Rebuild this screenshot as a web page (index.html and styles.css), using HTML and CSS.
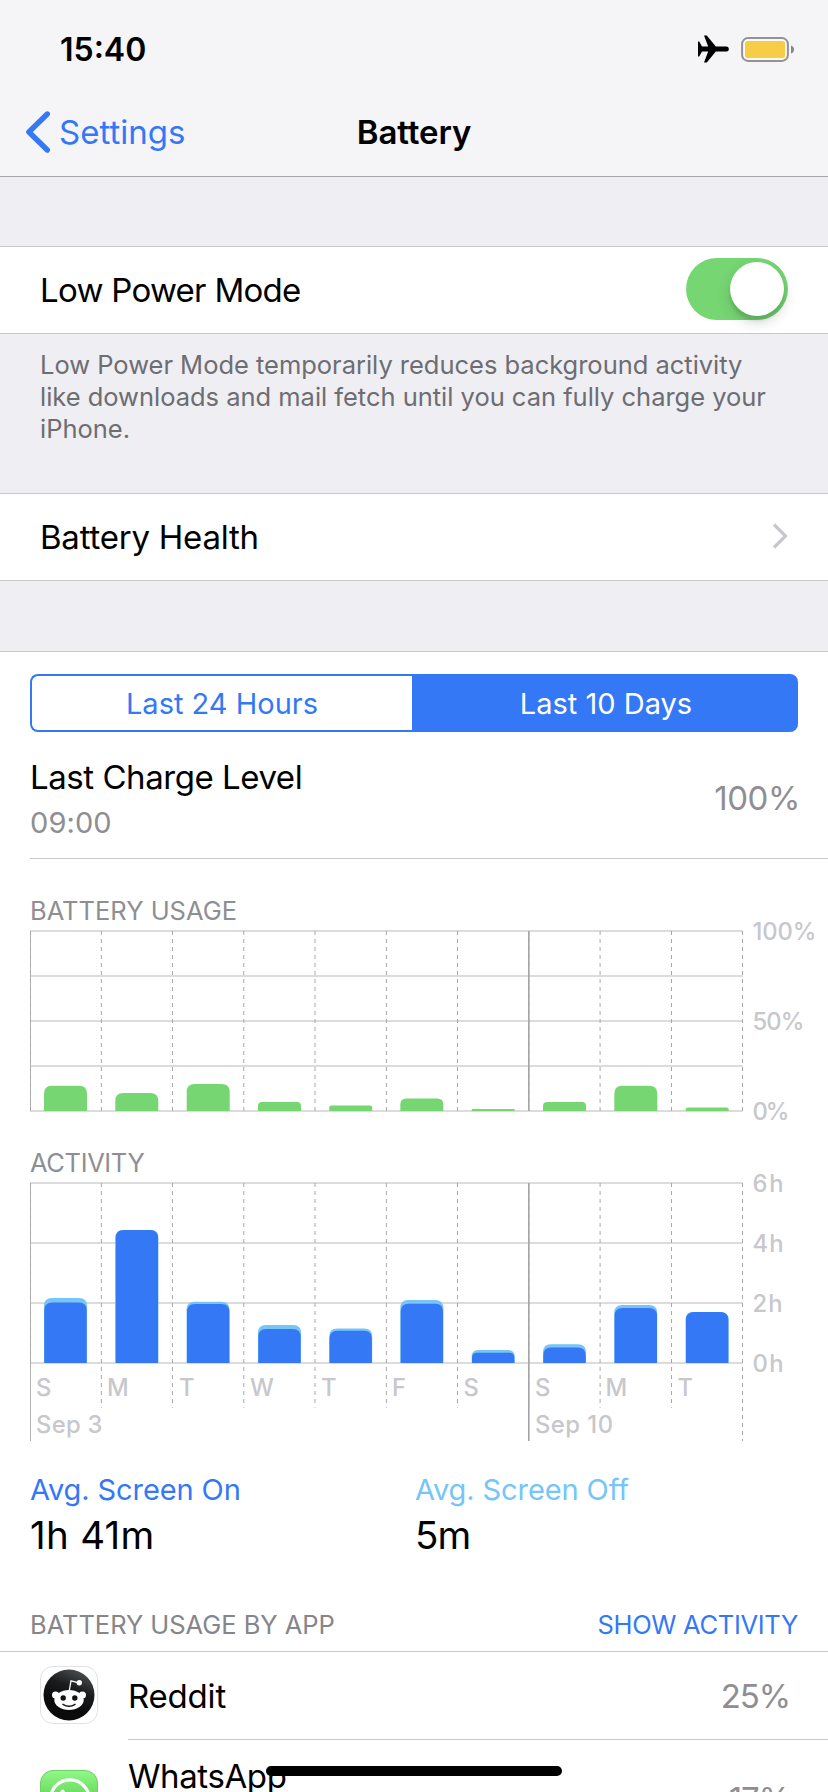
FILE: index.html
```html
<!DOCTYPE html>
<html lang="en">
<head>
<meta charset="utf-8">
<title>Battery</title>
<link rel="stylesheet" href="styles.css">
</head>
<body>
<div class="screen">
  <header class="header">
    <div class="status">
      <span class="clock">15:40</span>
      <svg class="status-icons" width="100" height="30" viewBox="0 0 100 30">
        <path d="M6 2h2.800l9 11h10.500a2.400 2.400 0 0 1 0 5H17.800l-9 11H6l4.200-11H4L1.200 23H0V8h1.200L4 13h6.200z" transform="translate(-2 -.5)"/>
        <rect x="44.100" y="4.100" width="45.800" height="22.800" rx="6" fill="#f9f9fa" stroke="#939395" stroke-width="2" transform="translate(-2 0)"/>
        <rect x="45" y="7" width="40" height="17" rx="2.500" fill="#f7cd46"/>
        <path d="M91 11.500q3 1 3 4t-3 4z" fill="#868688"/>
      </svg>
    </div>
    <nav class="nav">
      <a class="back"><svg width="26" height="44" viewBox="0 0 26 44"><path d="M23.300 4L4.900 22l18.400 18" fill="none" stroke="#3478f6" stroke-width="5.400" stroke-linecap="round" stroke-linejoin="round"/></svg><span class="back-label">Settings</span></a>
      <h1 class="title">Battery</h1>
    </nav>
  </header>

  <section class="row row-power">
    <span class="row-label lpm">Low Power Mode</span>
    <span class="switch"><span class="knob"></span></span>
  </section>
  <p class="note">Low Power Mode temporarily reduces background activity<br>like downloads and mail fetch until you can fully charge your<br>iPhone.</p>
  <section class="row row-health">
    <span class="row-label health">Battery Health</span>
    <svg class="chevron" width="18" height="28" viewBox="0 0 18 28"><path d="M3 2.500L14.500 14 3 25.500" fill="none" stroke="#c7c7cc" stroke-width="3.200"/></svg>
  </section>

  <main class="panel">
    <div class="segmented">
      <span class="segment seg-day">Last 24 Hours</span>
      <span class="segment active">Last 10 Days</span>
    </div>
    <div class="charge">
      <div>
        <div class="charge-title">Last Charge Level</div>
        <div class="charge-time">09:00</div>
      </div>
      <div class="charge-value">100%</div>
    </div>

    <h2 class="chart-title usage-title">BATTERY USAGE</h2>
    <svg class="chart" width="828" height="224" viewBox="0 925 828 224">
      <path class="grid" d="M30 931H742.500M30 976H742.500M30 1021H742.500M30 1066H742.500M30 1111H742.500"/>
      <path class="week" d="M528.800 931V1111"/>
      <path class="edge" d="M30.500 931V1111"/>
      <path class="dash" d="M30.500 931V1111M101.400 931V1111M172.500 931V1111M243.800 931V1111M315 931V1111M386.400 931V1111M457.500 931V1111M528.800 931V1111M600.100 931V1111M671.500 931V1111M742.500 931V1111"/>
      <g fill="#76d672">
        <path d="M44 1111v-17.200q0-8 8-8h27q8 0 8 8V1111z"/>
        <path d="M115.300 1111v-10q0-8 8-8h27q8 0 8 8v10z"/>
        <path d="M186.700 1111v-19q0-8 8-8h27q8 0 8 8v19z"/>
        <path d="M258 1111v-5q0-4 4-4h35q4 0 4 4v5z"/>
        <path d="M329.200 1111v-3.400q0-2 2-2h39q2 0 2 2v3.400z"/>
        <path d="M400.300 1111v-6.600q0-6 6-6h31q6 0 6 6v6.600z"/>
        <path d="M471.700 1111v-1q0-1 1-1h41q1 0 1 1v1z"/>
        <path d="M543 1111v-5q0-4 4-4h35q4 0 4 4v5z"/>
        <path d="M614.300 1111v-17.200q0-8 8-8h27q8 0 8 8V1111z"/>
        <path d="M685.700 1111v-1.600q0-2 2-2h39q2 0 2 2v1.600z"/>
      </g>
      <g class="axis">
        <text x="752.500" y="940" textLength="64">100%</text>
        <text x="752.500" y="1030" textLength="52">50%</text>
        <text x="752.500" y="1120" textLength="37">0%</text>
      </g>
    </svg>

    <h2 class="chart-title activity-title">ACTIVITY</h2>
    <svg class="chart" width="828" height="268" viewBox="0 1177 828 268">
      <path class="grid" d="M30 1183H742.500M30 1243H742.500M30 1303H742.500M30 1363H742.500"/>
      <path class="week" d="M528.800 1183V1441"/>
      <path class="edge" d="M30.500 1183V1441"/>
      <path class="dash" d="M30.500 1183V1363M101.400 1183V1407.700M172.500 1183V1407.700M243.800 1183V1407.700M315 1183V1407.700M386.400 1183V1407.700M457.500 1183V1407.700M528.800 1183V1407.700M600.100 1183V1407.700M671.500 1183V1407.700M742.500 1183V1441"/>
      <g fill="#76c5f6">
        <path d="M44 1363v-57q0-8 8-8h27q8 0 8 8v57z"/>
        <path d="M115.300 1363v-125q0-8 8-8h27q8 0 8 8v125z"/>
        <path d="M186.500 1363v-53.200q0-8 8-8h27q8 0 8 8v53.200z"/>
        <path d="M258 1363v-30q0-8 8-8h27q8 0 8 8v30z"/>
        <path d="M329.200 1363v-26.600q0-8 8-8h27q8 0 8 8v26.600z"/>
        <path d="M400.300 1363v-55q0-8 8-8h27q8 0 8 8v55z"/>
        <path d="M471.700 1363v-6.500q0-6.500 6.500-6.500h30q6.500 0 6.500 6.500v6.500z"/>
        <path d="M543 1363v-10.700q0-8 8-8h27q8 0 8 8v10.700z"/>
        <path d="M614.200 1363v-50q0-8 8-8h27q8 0 8 8v50z"/>
        <path d="M685.500 1363v-43q0-8 8-8h27q8 0 8 8v43z"/>
      </g>
      <g fill="#3478f6">
        <path d="M44.300 1363v-52.400q0-8 8-8h26.400q8 0 8 8v52.400z"/>
        <path d="M115.700 1363v-125q0-8 8-8h26.400q8 0 8 8v125z"/>
        <path d="M187 1363v-51q0-8 8-8h26.400q8 0 8 8v51z"/>
        <path d="M258.300 1363v-26q0-8 8-8h26.400q8 0 8 8v26z"/>
        <path d="M329.500 1363v-24.200q0-8 8-8h26.400q8 0 8 8v24.200z"/>
        <path d="M400.700 1363v-51.200q0-8 8-8h26.400q8 0 8 8v51.200z"/>
        <path d="M472 1363v-5q0-5.300 5.300-5.300h31.800q5.300 0 5.300 5.300v5z"/>
        <path d="M543.300 1363v-7.600q0-8 8-8h26.400q8 0 8 8v7.600z"/>
        <path d="M614.600 1363v-47q0-8 8-8h26.400q8 0 8 8v47z"/>
        <path d="M686 1363v-43q0-8 8-8h26.400q8 0 8 8v43z"/>
      </g>
      <g class="axis">
        <text x="752.500" y="1191.500" textLength="31">6h</text>
        <text x="752.500" y="1251.500" textLength="31">4h</text>
        <text x="752.500" y="1311.500" textLength="30">2h</text>
        <text x="752.500" y="1371.500" textLength="31">0h</text>
        <text x="36" y="1396">S</text>
        <text x="107" y="1396">M</text>
        <text x="179" y="1396">T</text>
        <text x="250" y="1396">W</text>
        <text x="321" y="1396">T</text>
        <text x="392" y="1396">F</text>
        <text x="463.500" y="1396">S</text>
        <text x="535" y="1396">S</text>
        <text x="605.500" y="1396">M</text>
        <text x="677.500" y="1396">T</text>
        <text x="36" y="1432.500" textLength="66.500">Sep 3</text>
        <text x="535" y="1432.500" textLength="78">Sep 10</text>
      </g>
    </svg>

    <div class="stats">
      <div class="stat"><div class="stat-label on">Avg. Screen On</div><div class="stat-value value-on">1h 41m</div></div>
      <div class="stat"><div class="stat-label off">Avg. Screen Off</div><div class="stat-value">5m</div></div>
    </div>

    <div class="apps-head">
      <span class="apps-title">BATTERY USAGE BY APP</span>
      <a class="apps-link">SHOW ACTIVITY</a>
    </div>
    <div class="app">
      <svg class="app-icon" width="58" height="58" viewBox="0 0 58 58">
        <defs><linearGradient id="ink" x1=".7" y1="0" x2=".4" y2=".7"><stop offset="0" stop-color="#4c5052"/><stop offset=".5" stop-color="#1b1c1d"/><stop offset="1" stop-color="#0b0b0c"/></linearGradient></defs>
        <rect x=".5" y=".5" width="57" height="57" rx="12.500" fill="#fff" stroke="#e2e2e3"/>
        <circle cx="29" cy="29" r="25.500" fill="url(#ink)"/>
        <path d="M29.200 25l1.800-10.200 8 2" fill="none" stroke="#fff" stroke-width="1.300"/>
        <circle cx="39.300" cy="16.800" r="2.700" fill="#fff"/>
        <circle cx="15.600" cy="29" r="3.600" fill="#fff"/><circle cx="42.400" cy="29" r="3.600" fill="#fff"/>
        <ellipse cx="29" cy="34" rx="14.700" ry="10" fill="#fff"/>
        <circle cx="23.200" cy="32" r="2.700" fill="#111"/><circle cx="34.800" cy="32" r="2.700" fill="#111"/>
        <path d="M23 38.300q6 4 12 0" fill="none" stroke="#111" stroke-width="1.400" stroke-linecap="round"/>
      </svg>
      <div class="app-body"><span class="app-name reddit">Reddit</span><span class="app-pct">25%</span></div>
    </div>
    <div class="app app-last">
      <svg class="app-icon" width="58" height="58" viewBox="0 0 58 58">
        <defs><linearGradient id="leaf" x1="0" y1="0" x2="0" y2="1"><stop offset="0" stop-color="#8ffa87"/><stop offset=".4" stop-color="#6ddc64"/><stop offset="1" stop-color="#2fb83c"/></linearGradient></defs>
        <rect x=".5" y=".5" width="57" height="57" rx="12.500" fill="url(#leaf)" stroke="#6fcf69"/>
        <path d="M10 49l2.800-10.200A19.500 19.500 0 1 1 20 46.200z" fill="none" stroke="#fff" stroke-width="3.200"/>
        <path d="M21 20.500c1-1.300 2.600-1.500 3.400.3l1.500 3.600c.3 1-.8 2-1.500 3 2 4 4.500 6 8 7.500 1.500-1.500 2-3 3.500-2.400l4 2.200c1 3-2 5.500-5 5.500-8 0-17-9.500-16.200-15.500z" fill="#fff"/>
      </svg>
      <div class="app-body"><span class="app-name whatsapp">WhatsApp</span><span class="app-pct">17%</span></div>
    </div>
  </main>
  <div class="home-indicator"></div>
</div>
</body>
</html>
```
FILE: styles.css
```css
* { box-sizing: border-box; }
body { margin: 0; }
.screen {
  position: relative;
  width: 828px;
  height: 1792px;
  overflow: hidden;
  background: #eeeef3;
  color: #000;
  font-family: Inter, "Liberation Sans", sans-serif;
  font-size: 33px;
  white-space: nowrap;
}
.header { height: 177px; background: #f5f5f7; border-bottom: 1px solid #a7a7aa; }
.status { display: flex; align-items: center; justify-content: space-between; height: 88px; padding: 10px 28px 0 60px; }
.clock { font-size: 32px; font-weight: 600; letter-spacing: 0; }
.status-icons { display: block; overflow: visible; }
.nav { display: grid; grid-template-columns: 1fr auto 1fr; align-items: center; height: 88px; }
.back { display: flex; align-items: center; padding-left: 24px; color: #3478f6; }
.back-label { margin-left: 9px; letter-spacing: 0; }
.title { margin: 0; font-size: 33px; font-weight: 600; letter-spacing: -0.1px; }

.row { display: flex; align-items: center; justify-content: space-between; height: 88px; padding: 0 40px; background: #fff; border: 1px solid #c8c7cc; border-width: 1px 0; }
.row-power { margin-top: 69px; }
.lpm { letter-spacing: -0.72px; }
.health { letter-spacing: -0.23px; }
.switch { display: flex; justify-content: flex-end; width: 102px; height: 62px; margin-top: -2px; padding: 4px; border-radius: 31px; background: #76d672; }
.knob { width: 54px; height: 54px; border-radius: 50%; background: #fff; box-shadow: 0 6px 14px rgba(0, 0, 0, .17), 0 5px 3px rgba(0, 0, 0, .08); }
.note { height: 159px; margin: 0; padding: 15px 40px 0; color: #6d6d72; font-size: 25.500px; line-height: 32px; letter-spacing: -0.02px; }
.row-health { padding-right: 39px; }
.chevron { margin-top: -2px; }

.panel { margin-top: 70px; background: #fff; border-top: 1px solid #c8c7cc; height: 1141px; }
.segmented { display: flex; height: 80px; padding: 22px 30px 0; font-size: 29px; }
.segment { display: flex; align-items: center; justify-content: center; width: 386px; border: 2px solid #3478f6; border-right: 0; border-radius: 8px 0 0 8px; color: #3478f6; }
.seg-day { width: 382px; }
.segment.active { border-radius: 0 8px 8px 0; background: #3478f6; color: #fff; }
.charge { display: flex; justify-content: space-between; height: 127px; margin-left: 30px; padding-right: 28px; border-bottom: 1px solid #c8c7cc; }
.charge-title { margin-top: 24px; line-height: 42px; letter-spacing: -0.45px; }
.charge-time { margin-top: 4px; font-size: 29px; line-height: 41px; letter-spacing: 0.1px; color: #8e8e93; }
.charge-value { margin-top: 45px; line-height: 42px; letter-spacing: -0.4px; color: #8e8e93; }

.chart-title { margin: 0 0 0 30px; color: #8e8e93; font-size: 25.500px; font-weight: 400; line-height: 28px; }
.usage-title { padding-top: 38px; }
.activity-title { letter-spacing: -0.38px; }
.chart { display: block; overflow: visible; }
.grid { stroke: #dcdcdd; stroke-width: 2; }
.week { stroke: #a3a3a4; stroke-width: 1.600; }
.edge { stroke: #b2b2b4; stroke-width: 1; }
.dash { fill: none; stroke: #a8a8aa; stroke-width: 1; stroke-dasharray: 4 4; }
.axis { fill: #c7c7cc; font-size: 23.800px; font-weight: 500; }

.stats { display: flex; margin-left: 30px; padding-top: 26px; }
.stat { width: 385px; }
.stat-label { font-size: 29px; line-height: 37px; letter-spacing: -0.1px; }
.on { color: #3478f6; }
.off { color: #76c5f8; }
.stat-value { margin-top: 4px; font-size: 38.500px; line-height: 46px; letter-spacing: -1px; }
.value-on { letter-spacing: 0.3px; }

.apps-head { display: flex; justify-content: space-between; height: 94px; padding: 53px 30px 0; border-bottom: 1px solid #c8c7cc; color: #8e8e93; font-size: 25.500px; line-height: 28px; }
.apps-title { color: #85858a; letter-spacing: -0.04px; }
.apps-link { color: #3478f6; letter-spacing: -0.3px; }
.app { display: flex; height: 88px; }
.app-icon { flex: none; display: block; margin: 14px 30px 0 40px; }
.app-body { display: flex; flex: 1; align-items: center; justify-content: space-between; padding-right: 38px; border-bottom: 1px solid #c8c7cc; }
.reddit { letter-spacing: -0.2px; }
.app-pct { color: #8e8e93; letter-spacing: -1.1px; }
.app-last { height: 118px; }
.app-last .app-icon { margin-top: 30px; }
.whatsapp { margin-bottom: 46px; letter-spacing: -0.4px; }
.home-indicator { position: absolute; left: 266px; top: 1766px; width: 296px; height: 10px; border-radius: 5px; background: #000; }
```
